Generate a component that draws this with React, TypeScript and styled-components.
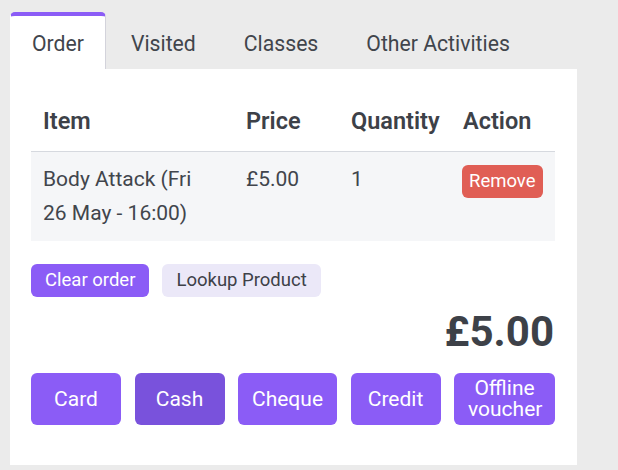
import React from "react";
import styled, { createGlobalStyle } from "styled-components";

const Global = createGlobalStyle`
  html, body {
    margin: 0;
    padding: 0;
    background: #ebebeb;
    font-family: Roboto, "Liberation Sans", Arial, sans-serif;
    color: #41454c;
  }
  * { box-sizing: border-box; }
`;

const Page = styled.div`
  padding: 12px 0 0 10px;
  width: 618px;
  height: 470px;
`;

const Tabs = styled.div`
  display: flex;
  align-items: flex-end;
  gap: 3px;
`;

const Tab = styled.div<{ $active?: boolean }>`
  font-size: 21.2px;
  line-height: 24px;
  padding: 16px 21px 13px;
  margin-right: ${(p) => (p.$active ? "0" : "1px")};
  border-top: 4px solid ${(p) => (p.$active ? "#8b5cf6" : "transparent")};
  border-left: 1px solid ${(p) => (p.$active ? "#ffffff" : "transparent")};
  border-right: 1px solid ${(p) => (p.$active ? "#d3d3db" : "transparent")};
  border-radius: 5px 5px 0 0;
  background: ${(p) => (p.$active ? "#ffffff" : "transparent")};
  color: #41454c;
  white-space: nowrap;
`;

const Panel = styled.div`
  width: 567px;
  background: #ffffff;
  padding: 22px 22px 40px 21px;
`;

const Table = styled.table`
  width: 524px;
  table-layout: fixed;
  border-collapse: collapse;
`;

const Col = styled.col<{ $w: number }>`
  width: ${(p) => p.$w}px;
`;

const Th = styled.th`
  text-align: left;
  font-size: 23.5px;
  line-height: 36px;
  font-weight: 600;
  color: #3d4148;
  padding: 12px 12px;
  border-bottom: 1px solid #d6d9df;
  white-space: nowrap;
`;

const Td = styled.td`
  vertical-align: top;
  font-size: 21px;
  line-height: 33.6px;
  padding: 11px 16px 11px 12px;
  background: #f5f6f8;
  color: #41454c;
`;

const SmallButton = styled.button<{ $variant: "primary" | "light" | "danger" }>`
  font-family: inherit;
  font-size: 18.5px;
  line-height: 33px;
  height: 33px;
  padding: 0 14px;
  border: none;
  border-radius: 6px;
  cursor: pointer;
  background: ${(p) =>
    p.$variant === "primary" ? "#8b5cf6" : p.$variant === "danger" ? "#e05e55" : "#ebe8f8"};
  color: ${(p) => (p.$variant === "light" ? "#3d4148" : "#ffffff")};
`;

const RemoveButton = styled(SmallButton)`
  padding: 0 7px;
  margin: 2px 0 0 -1px;
  display: block;
`;

const Actions = styled.div`
  display: flex;
  gap: 13px;
  margin-top: 23px;
`;

const Total = styled.div`
  text-align: right;
  font-size: 42px;
  line-height: 48px;
  font-weight: 700;
  color: #3d4148;
  margin-top: 11px;
  padding-right: 1px;
`;

const PayRow = styled.div`
  display: flex;
  gap: 13.5px;
  margin-top: 17px;
  width: 524px;
`;

const PayButton = styled.button<{ $active?: boolean; $wrap?: boolean }>`
  flex: ${(p) => (p.$wrap ? "1 1 0" : "none")};
  min-width: ${(p) => (p.$wrap ? "0" : "90px")};
  height: 52px;
  padding: 0 14px;
  font-family: inherit;
  font-size: 21px;
  line-height: 21px;
  border: none;
  border-radius: 6px;
  color: #ffffff;
  background: ${(p) => (p.$active ? "#7952dc" : "#8b5cf6")};
  cursor: pointer;
`;

export default function App() {
  return (
    <Page>
      <Global />
      <Tabs>
        <Tab $active>Order</Tab>
        <Tab>Visited</Tab>
        <Tab>Classes</Tab>
        <Tab>Other Activities</Tab>
      </Tabs>
      <Panel>
        <Table>
          <colgroup>
            <Col $w={203} />
            <Col $w={105} />
            <Col $w={112} />
            <Col $w={104} />
          </colgroup>
          <thead>
            <tr>
              <Th>Item</Th>
              <Th>Price</Th>
              <Th>Quantity</Th>
              <Th>Action</Th>
            </tr>
          </thead>
          <tbody>
            <tr>
              <Td>Body Attack (Fri 26 May - 16:00)</Td>
              <Td>£5.00</Td>
              <Td>1</Td>
              <Td>
                <RemoveButton $variant="danger">Remove</RemoveButton>
              </Td>
            </tr>
          </tbody>
        </Table>
        <Actions>
          <SmallButton $variant="primary">Clear order</SmallButton>
          <SmallButton $variant="light">Lookup Product</SmallButton>
        </Actions>
        <Total>£5.00</Total>
        <PayRow>
          <PayButton>Card</PayButton>
          <PayButton $active>Cash</PayButton>
          <PayButton>Cheque</PayButton>
          <PayButton>Credit</PayButton>
          <PayButton $wrap>Offline voucher</PayButton>
        </PayRow>
      </Panel>
    </Page>
  );
}
